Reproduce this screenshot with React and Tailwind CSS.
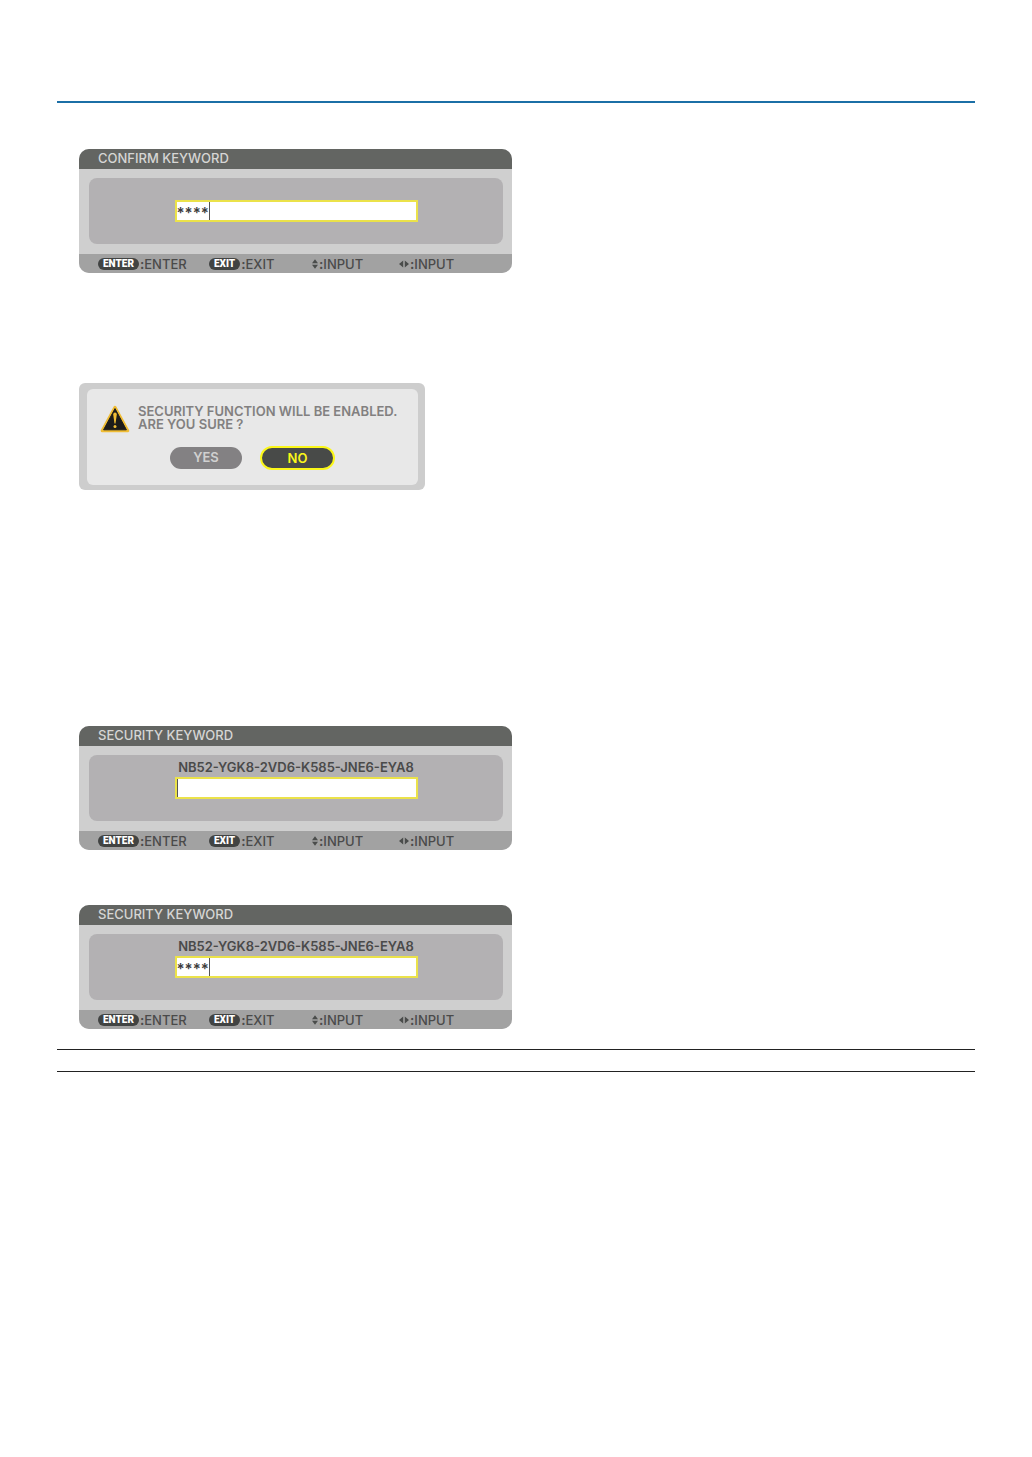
import React, { useState } from 'react';

function KeyBadge({ children }) {
  return (
    <kbd className="flex h-3 items-center justify-center rounded-full bg-[#414342] px-[5px] font-['Roboto'] text-[10px] leading-3 font-black text-white">
      {children}
    </kbd>
  );
}

function UpDownIcon() {
  return (
    <svg viewBox="0 0 6 10" className="h-2.5 w-1.5" fill="#4a4c4b" aria-hidden="true">
      <path d="M3 0.3 6 4.3H0ZM3 9.7 0 5.7H6Z" />
    </svg>
  );
}

function LeftRightIcon() {
  return (
    <svg viewBox="0 0 10 8" className="h-2 w-2.5" fill="#4a4c4b" aria-hidden="true">
      <path d="M0 4 4.2 0.6V7.4ZM10 4 5.8 7.4V0.6Z" />
    </svg>
  );
}

function Hint({ className, icon, label }) {
  return (
    <div className={`flex items-center ${className}`}>
      {icon}
      <span className="ml-px font-bold">:</span>
      <span>{label}</span>
    </div>
  );
}

function KeywordPanel({ title, code, initial, id }) {
  const [value, setValue] = useState(initial);
  return (
    <section className="w-full max-w-[433px] overflow-hidden rounded-[10px] bg-[#cfcfcf] text-[13px] font-medium text-[#4a4a4a]">
      <h2 className="h-5 bg-[#636562] pl-[19px] leading-[19px] text-[#d6d6d4]">{title}</h2>
      <div className="pt-[9px] pr-[9px] pb-[10px] pl-[10px]">
        <div className="flex h-[66px] flex-col items-center rounded-lg bg-[#b3b1b3]">
          <div className="h-[22px] pt-1 leading-4 font-semibold">
            {code && <label htmlFor={id}>{code}</label>}
          </div>
          <div className="relative flex h-[22px] w-[243px] border-2 border-[#ebe24a] bg-white">
            <input
              id={id}
              type="text"
              aria-label={code ? undefined : title}
              value={value}
              onChange={(e) => setValue(e.target.value)}
              className="h-[18px] w-full bg-transparent pt-0.5 text-[15px] leading-4 font-semibold text-[#3c3c3c] outline-none"
            />
            <span
              className={`absolute top-0 h-[18px] w-px bg-[#555] ${initial ? 'left-8' : 'left-0'}`}
            />
          </div>
        </div>
      </div>
      <footer className="flex h-[19px] items-center bg-[#a2a2a2] pl-[19px] leading-4">
        <Hint className="w-[111px]" icon={<KeyBadge>ENTER</KeyBadge>} label="ENTER" />
        <Hint className="w-[103px]" icon={<KeyBadge>EXIT</KeyBadge>} label="EXIT" />
        <Hint className="w-[87px]" icon={<UpDownIcon />} label="INPUT" />
        <Hint className="" icon={<LeftRightIcon />} label="INPUT" />
      </footer>
    </section>
  );
}

function WarningIcon() {
  return (
    <svg viewBox="0 0 30 28" className="h-7 w-[30px] shrink-0" aria-hidden="true">
      <path
        d="M15 2.2 27.8 25.8H2.2Z"
        fill="#f0bd35"
        stroke="#f0bd35"
        strokeWidth="3"
        strokeLinejoin="round"
      />
      <path
        d="M15 3.6 26.4 24.8H3.6Z"
        fill="#1d1c1a"
        stroke="#1d1c1a"
        strokeWidth="1"
        strokeLinejoin="round"
      />
      <path d="M13.2 9.4a1.8 1.8 0 0 1 3.6 0L15.5 18.5h-1Z" fill="#f0bd35" />
      <circle cx="15" cy="21.6" r="1.5" fill="#f0bd35" />
    </svg>
  );
}

function ConfirmDialog() {
  return (
    <section
      role="alertdialog"
      aria-labelledby="confirm-text"
      className="w-full max-w-[346px] rounded-md bg-[#cdcdcd] pt-1.5 pr-[7px] pb-[5px] pl-2"
    >
      <div className="h-24 rounded-md bg-[#e8e8e8] pt-4 pl-[13px]">
        <div className="flex gap-2">
          <WarningIcon />
          <p
            id="confirm-text"
            className="text-[13px] leading-[13px] font-semibold whitespace-nowrap text-[#828080]"
          >
            SECURITY FUNCTION WILL BE ENABLED.
            <br />
            ARE YOU SURE ?
          </p>
        </div>
        <div className="mt-[13px] flex items-center gap-[18px] pl-[70px]">
          <button
            type="button"
            className="h-[22px] w-[72px] rounded-full bg-[#838183] text-[13px] font-semibold text-[#d0d0d0]"
          >
            YES
          </button>
          <button
            type="button"
            className="h-6 w-[75px] rounded-full border-2 border-[#fbf719] bg-[#484a48] text-[13px] leading-5 font-semibold text-[#fbf719]"
          >
            NO
          </button>
        </div>
      </div>
    </section>
  );
}

export default function App() {
  return (
    <main className="min-h-screen bg-white px-[57px] pt-[101px] font-['Inter',sans-serif]">
      <hr className="border-t-2 border-[#1b6fa6]" />
      <div className="flex flex-col px-[22px] pt-[46px] pb-5">
        <KeywordPanel id="confirm-keyword" title="CONFIRM KEYWORD" initial="****" />
        <div className="mt-[110px]">
          <ConfirmDialog />
        </div>
        <div className="mt-[236px] flex flex-col gap-[55px]">
          <KeywordPanel
            id="security-keyword-empty"
            title="SECURITY KEYWORD"
            code="NB52-YGK8-2VD6-K585-JNE6-EYA8"
            initial=""
          />
          <KeywordPanel
            id="security-keyword"
            title="SECURITY KEYWORD"
            code="NB52-YGK8-2VD6-K585-JNE6-EYA8"
            initial="****"
          />
        </div>
      </div>
      <div className="h-[23px] border-y border-[#222]" />
    </main>
  );
}
